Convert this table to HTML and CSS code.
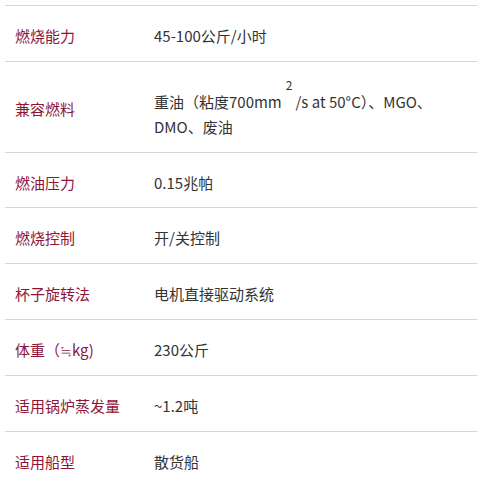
FILE: index.html
```html
<!DOCTYPE html>
<html lang="zh">
<head>
<meta charset="utf-8">
<link rel="stylesheet" href="styles.css">
</head>
<body>
<div class="spec">
  <div class="row"><div class="label">燃烧能力</div><div class="value">45-100公斤/小时</div></div>
  <div class="row"><div class="label">兼容燃料</div><div class="value">重油（粘度700mm<sup class="sq">2</sup>/s at 50°C）、MGO、DMO、废油</div></div>
  <div class="row"><div class="label">燃油压力</div><div class="value">0.15兆帕</div></div>
  <div class="row"><div class="label">燃烧控制</div><div class="value">开/关控制</div></div>
  <div class="row"><div class="label">杯子旋转法</div><div class="value">电机直接驱动系统</div></div>
  <div class="row"><div class="label">体重（≒kg)</div><div class="value">230公斤</div></div>
  <div class="row"><div class="label">适用锅炉蒸发量</div><div class="value">~1.2吨</div></div>
  <div class="row"><div class="label">适用船型</div><div class="value">散货船</div></div>
</div>
</body>
</html>
```
FILE: styles.css
```css
html, body {
  margin: 0;
  padding: 0;
  background: #ffffff;
}
body {
  font-family: "Noto Sans CJK SC", "Noto Sans", sans-serif;
  font-size: 15px;
  line-height: 25px;
  overflow: hidden;
}
.spec {
  margin: 5px 1px 0 5px;
}
.row {
  display: grid;
  grid-template-columns: 149px 1fr;
  align-items: center;
  border-top: 1px solid #d6d6d6;
  padding: 17px 0 12.8px;
}
.label {
  padding-left: 10px;
  color: #8e1538;
}
.value {
  color: #333333;
  padding-right: 10px;
}
.sq {
  font-size: 12px;
  line-height: 12px;
  vertical-align: 18px;
  margin: 0 3px 0 4px;
}
```
